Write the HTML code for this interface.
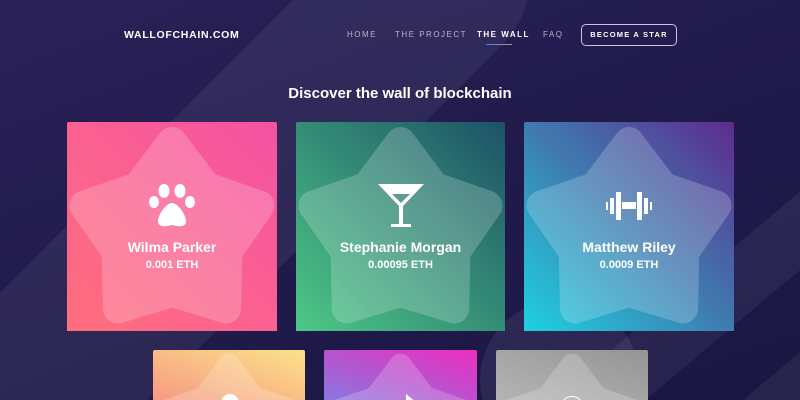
<!DOCTYPE html>
<html><head><meta charset="utf-8"><style>
*{margin:0;padding:0;box-sizing:border-box}
html,body{width:800px;height:400px;overflow:hidden}
body{background:#1f1a48;font-family:"Liberation Sans",sans-serif;position:relative}
.bg{position:absolute;inset:0;background:linear-gradient(160deg,#2a2158 0%,#211b4c 50%,#1a1642 100%);overflow:hidden}
.band{position:absolute;background:rgba(255,255,255,0.06)}
.nav{position:absolute;top:0;left:0;width:800px;height:70px;color:#fff}
.logo{position:absolute;left:124px;top:29px;font-size:10.5px;font-weight:bold;letter-spacing:0.7px}
.nl{position:absolute;top:30px;font-size:8px;letter-spacing:1.5px;color:#b8b4cc}
.btn{position:absolute;left:581px;top:24px;width:96px;height:22px;border:1px solid #c9c5da;border-radius:5px;font-size:7.5px;font-weight:bold;letter-spacing:1.2px;color:#fff;text-align:center;line-height:20px}
h1{position:absolute;left:0;width:800px;top:85px;text-align:center;color:#fff;font-size:15px;font-weight:bold}
.card{position:absolute;border-radius:2px 2px 0 0;overflow:hidden;color:#fff;text-align:center}
.card svg.star{position:absolute;left:0;top:0;width:100%;height:100%}
.sm svg.star{height:152px}
.name{position:absolute;width:100%;top:117px;font-size:14px;font-weight:bold}
.price{position:absolute;width:100%;top:137px;font-size:11px;font-weight:bold}
.ic{position:absolute;left:50%;transform:translateX(-50%)}
</style></head><body>
<div class="bg">
<div class="band" style="left:130px;top:-200px;width:180px;height:800px;transform:rotate(45deg);border-radius:90px"></div>
<div class="band" style="left:640px;top:40px;width:60px;height:600px;transform:rotate(50deg);border-radius:30px"></div>
<div class="band" style="left:700px;top:150px;width:60px;height:600px;transform:rotate(50deg);border-radius:30px"></div>
<div class="band" style="left:480px;top:300px;width:160px;height:160px;border-radius:50%;background:rgba(255,255,255,0.07)"></div>
</div>
<div class="nav">
<div class="logo">WALLOFCHAIN.COM</div>
<div class="nl" style="left:347px">HOME</div>
<div class="nl" style="left:395px">THE PROJECT</div>
<div class="nl" style="left:477px;color:#fff;font-weight:bold">THE WALL</div>
<div style="position:absolute;left:486px;top:44px;width:26px;height:1px;background:linear-gradient(90deg,#4a7fd0,#a89a70)"></div>
<div class="nl" style="left:543px">FAQ</div>
<div class="btn">BECOME A STAR</div>
</div>
<h1>Discover the wall of blockchain</h1>

<svg width="0" height="0" style="position:absolute"><defs>
<g id="st" opacity="0.2"><polygon points="105,20 139.1,65.1 192.5,83.6 160.2,129.9 159.1,186.4 105,170 50.9,186.4 49.8,129.9 17.5,83.6 70.9,65.1" fill="#fff" stroke="#fff" stroke-width="30" stroke-linejoin="round"/></g>
</defs></svg>

<div class="card" style="left:67px;top:122px;width:210px;height:209px;background:linear-gradient(45deg,#ff6f7d,#f552a3)">
<svg class="star" viewBox="0 0 210 209" preserveAspectRatio="none"><use href="#st"/></svg>
<svg class="ic" style="top:62px" width="48" height="44" viewBox="0 0 48 44" fill="#fff"><ellipse cx="6" cy="18" rx="5" ry="6"/><ellipse cx="16" cy="7" rx="5.5" ry="7"/><ellipse cx="32" cy="7" rx="5.5" ry="7"/><ellipse cx="42" cy="18" rx="5" ry="6"/><path d="M24 19c-6 0-14 12-14 18 0 6 6 6 14 4 8 2 14 2 14-4 0-6-8-18-14-18z"/></svg>
<div class="name">Wilma Parker</div><div class="price">0.001 ETH</div></div>

<div class="card" style="left:296px;top:122px;width:209px;height:209px;background:linear-gradient(45deg,#4dc886,#1d5267)">
<svg class="star" viewBox="0 0 210 209" preserveAspectRatio="none"><use href="#st"/></svg>
<svg class="ic" style="top:62px" width="48" height="44" viewBox="0 0 48 44" fill="#fff"><path d="M1 0h46L26 22v18h8v3H14v-3h8V22z M15 10h18l-9 9z" fill-rule="evenodd"/></svg>
<div class="name">Stephanie Morgan</div><div class="price">0.00095 ETH</div></div>

<div class="card" style="left:524px;top:122px;width:210px;height:209px;background:linear-gradient(45deg,#1ed2e1,#3f7bb0 50%,#5e2b8e)">
<svg class="star" viewBox="0 0 210 209" preserveAspectRatio="none"><use href="#st"/></svg>
<svg class="ic" style="top:70px" width="46" height="28" viewBox="0 0 46 28" fill="#fff"><rect x="0" y="10" width="2" height="8"/><rect x="4" y="6" width="4" height="16"/><rect x="10" y="0" width="5" height="28"/><rect x="16" y="10" width="14" height="7"/><rect x="31" y="0" width="5" height="28"/><rect x="38" y="6" width="4" height="16"/><rect x="44" y="10" width="2" height="8"/></svg>
<div class="name">Matthew Riley</div><div class="price">0.0009 ETH</div></div>

<div class="card sm" style="left:153px;top:350px;width:152px;height:50px;background:linear-gradient(20deg,#f69a82,#fbe28a)">
<svg class="star" viewBox="0 0 210 209" preserveAspectRatio="none"><use href="#st"/></svg>
<div style="position:absolute;left:68px;top:44px;width:18px;height:18px;border-radius:50%;background:#fff"></div></div>
<div class="card sm" style="left:324px;top:350px;width:153px;height:50px;background:linear-gradient(20deg,#8a78e0,#b058d0 40%,#ee2ec2)">
<svg class="star" viewBox="0 0 210 209" preserveAspectRatio="none"><use href="#st"/></svg>
<div style="position:absolute;left:82px;top:44px;width:0;height:0;border-left:10px solid #fff;border-top:8px solid transparent;border-bottom:8px solid transparent"></div></div>
<div class="card sm" style="left:496px;top:350px;width:152px;height:50px;background:linear-gradient(20deg,#b4b4b4,#959595)">
<svg class="star" viewBox="0 0 210 209" preserveAspectRatio="none"><use href="#st"/></svg>
<div style="position:absolute;left:64px;top:46px;width:24px;height:24px;border-radius:50%;border:1.5px solid #fff"></div></div>
</body></html>
